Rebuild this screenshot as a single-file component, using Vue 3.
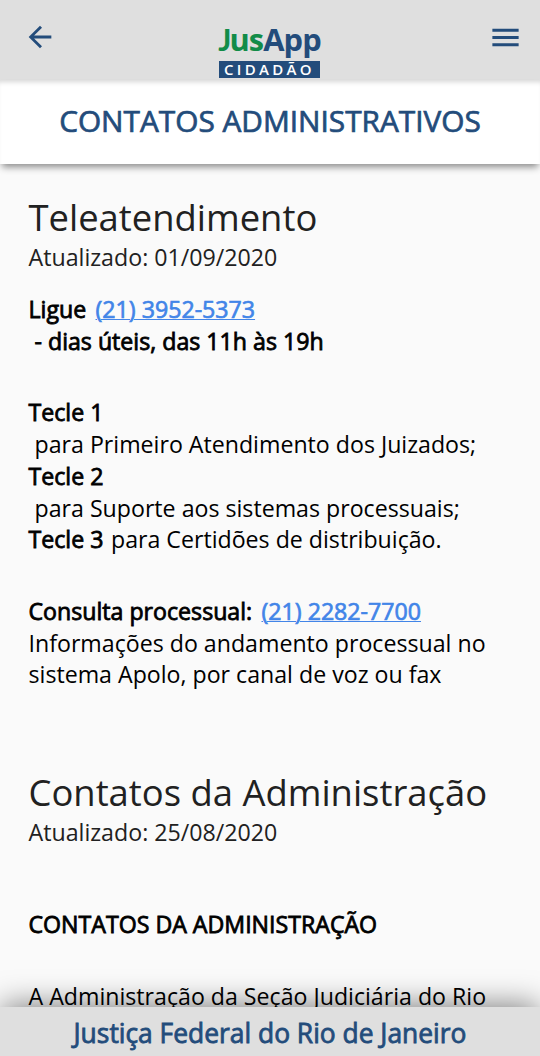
<template>
  <div class="screen">
    <header class="topbar">
      <button class="icon-btn" aria-label="Voltar">
        <svg width="34" height="34" viewBox="0 0 24 24"><path d="M20 11H7.83l5.59-5.59L12 4l-8 8 8 8 1.41-1.41L7.83 13H20v-2z" /></svg>
      </button>
      <div class="logo">
        <div class="logo-name"><span class="jus"><span class="j">J</span>us</span><span class="app">App</span></div>
        <div class="logo-tag">CIDADÃO</div>
      </div>
      <button class="icon-btn menu" aria-label="Menu">
        <svg width="35" height="35" viewBox="0 0 24 24"><path d="M3 18h18v-2H3v2zm0-5h18v-2H3v2zm0-7v2h18V6H3z" /></svg>
      </button>
    </header>
    <div class="page-title"><h1>CONTATOS ADMINISTRATIVOS</h1></div>
    <main class="content">
      <section v-for="s in sections" :key="s.title" class="section">
        <h2>{{ s.title }}</h2>
        <p class="updated">Atualizado: {{ s.updated }}</p>
        <div v-for="(block, i) in s.blocks" :key="i" class="block">
          <div v-for="(line, j) in block" :key="j" class="line">
            <component :is="part.tel ? 'a' : 'span'" v-for="(part, k) in line" :key="k"
              :href="part.tel" :class="{ strong: part.strong, tel: part.tel }">{{ part.text }}</component>
          </div>
        </div>
      </section>
    </main>
    <footer class="bottombar">Justiça Federal do Rio de Janeiro</footer>
  </div>
</template>

<script setup>
const b = (text) => ({ text, strong: true });
const t = (text) => ({ text });
const tel = (text, number) => ({ text, strong: true, tel: "tel:" + number });

const sections = [
  {
    title: "Teleatendimento",
    updated: "01/09/2020",
    blocks: [
      [[b("Ligue "), tel("(21) 3952-5373", "2139525373")], [b(" - dias úteis, das 11h às 19h")]],
      [
        [b("Tecle 1")],
        [t(" para Primeiro Atendimento dos Juizados;")],
        [b("Tecle 2")],
        [t(" para Suporte aos sistemas processuais;")],
        [b("Tecle 3"), t(" para Certidões de distribuição.")]
      ],
      [
        [b("Consulta processual: "), tel("(21) 2282-7700", "2122827700")],
        [t("Informações do andamento processual no")],
        [t("sistema Apolo, por canal de voz ou fax")]
      ]
    ]
  },
  {
    title: "Contatos da Administração",
    updated: "25/08/2020",
    blocks: [
      [],
      [[b("CONTATOS DA ADMINISTRAÇÃO")]],
      [[t("A Administração da Seção Judiciária do Rio")]]
    ]
  }
];
</script>

<style>
body { margin: 0; overflow: hidden; }
</style>

<style scoped>
.screen { height: 1056px; display: flex; flex-direction: column; overflow: hidden; background: #fafafa; font-family: "Open Sans", "Noto Sans", sans-serif; color: #000; }
.topbar { height: 80px; flex: none; box-sizing: border-box; display: flex; justify-content: space-between; padding: 0 18px 0 23px; background: #dfdfdf; }
.icon-btn { width: 34px; height: 74px; padding: 0; border: 0; background: none; display: flex; align-items: center; }
.icon-btn svg { flex: none; fill: #234c7b; }
.logo { width: 102px; margin-right: 6px; padding: 22px 0 2px; box-sizing: border-box; display: flex; flex-direction: column; align-items: center; }
.logo-name { height: 39px; font-size: 30.8px; line-height: 35px; font-weight: 700; letter-spacing: -0.9px; white-space: nowrap; }
.jus { color: #128c48; }
.j { font-family: Lato, sans-serif; letter-spacing: -2px; }
.app { color: #234c7b; }
.logo-tag { width: 101px; height: 17px; box-sizing: border-box; padding-left: 5px; background: #234c7b; color: #fff; font-size: 15px; line-height: 16px; font-weight: 600; letter-spacing: 3.3px; white-space: nowrap; }
.page-title { height: 84px; flex: none; z-index: 1; display: flex; align-items: center; justify-content: center; background: #fff; box-shadow: inset 0 5px 5px -3px rgba(0, 0, 0, 0.16), 0 5px 7px -2px rgba(0, 0, 0, 0.45); }
h1 { margin: 0; font-size: 29.8px; font-weight: 400; line-height: 82px; padding-bottom: 2px; color: #234c7b; -webkit-text-stroke: 0.7px #234c7b; white-space: nowrap; }
.content { flex: 1; min-height: 0; overflow: hidden; padding: 28px 28px 0 28.5px; }
.section { height: 575px; }
h2 { margin: 0; font-size: 36.4px; line-height: 51px; font-weight: 400; color: #212121; white-space: nowrap; }
.updated { margin: 0 0 23px; font-size: 23.2px; line-height: 28px; color: #212121; }
.block { margin-bottom: 40px; }
.block:empty { height: 20px; margin-bottom: 20px; }
.line { font-size: 23.17px; line-height: 31.7px; white-space: pre; }
.strong { -webkit-text-stroke: 0.8px currentColor; }
.strong + * { margin-left: 1.5px; }
.strong + .tel { margin-left: 3.3px; -webkit-text-stroke-width: 0.7px; }
.tel { color: #4285e8; text-decoration: underline; text-decoration-thickness: 1px; }
.bottombar { height: 49px; flex: none; z-index: 1; background: #dfdfdf; color: #234c7b; font-size: 26.4px; line-height: 52px; text-align: center; -webkit-text-stroke: 0.8px #234c7b; box-shadow: 0 -4px 30px -2px rgba(0, 0, 0, 0.5); }
</style>
